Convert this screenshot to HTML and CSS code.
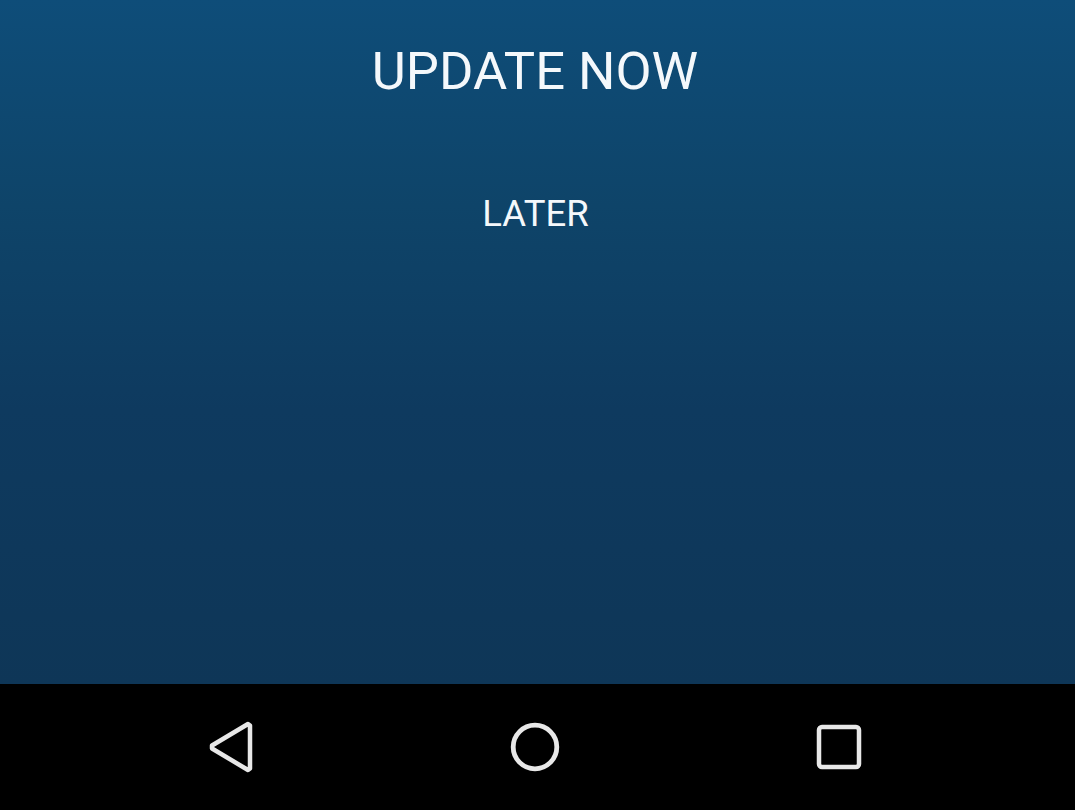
FILE: index.html
```html
<!DOCTYPE html>
<html>
<head>
<meta charset="utf-8">
<link rel="stylesheet" href="styles.css">
</head>
<body>
<div class="screen">
  <main class="content">
    <button class="btn btn-primary">UPDATE NOW</button>
    <button class="btn btn-secondary">LATER</button>
  </main>
  <nav class="navbar">
    <span class="nav-item">
      <svg width="48" height="52" viewBox="0 0 48 52"><path d="M40 3 L42 4.5 L42 47.5 L40 49 L4 27.5 L4 24.5 Z" fill="none" stroke="#e8e8e8" stroke-width="4.5" stroke-linejoin="round"/></svg>
    </span>
    <span class="nav-item">
      <svg width="50" height="50" viewBox="0 0 50 50"><circle cx="25" cy="25" r="21.8" fill="none" stroke="#e8e8e8" stroke-width="4.8"/></svg>
    </span>
    <span class="nav-item">
      <svg width="46" height="46" viewBox="0 0 46 46"><rect x="3" y="3" width="40" height="40" rx="3" fill="none" stroke="#e8e8e8" stroke-width="4.5"/></svg>
    </span>
  </nav>
</div>
</body>
</html>
```

FILE: styles.css
```css
html, body {
  margin: 0;
  padding: 0;
}
body {
  width: 1075px;
  height: 810px;
  overflow: hidden;
  font-family: Roboto, "Liberation Sans", sans-serif;
}
.screen {
  display: flex;
  flex-direction: column;
  height: 810px;
}
.content {
  height: 684px;
  background: linear-gradient(to bottom, #0e4d79 0%, #0e4469 30%, #0e3a5f 60%, #0e3657 100%);
  display: flex;
  flex-direction: column;
  align-items: center;
}
.btn {
  background: none;
  border: none;
  color: #f4f8fb;
  font-family: Roboto, "Liberation Sans", sans-serif;
  padding: 0;
  line-height: 1;
}
.btn-primary {
  font-size: 52.5px;
  margin-top: 45px;
  margin-right: 5px;
}
.btn-secondary {
  font-size: 36.5px;
  margin-top: 98px;
  margin-right: 4px;
}
.navbar {
  height: 126px;
  background: #000;
  display: flex;
  align-items: center;
  justify-content: flex-start;
  padding-left: 208px;
}
.nav-item {
  display: flex;
  align-items: center;
  justify-content: center;
}
.nav-item:nth-child(1) {
  width: 48px;
  margin-right: 254px;
}
.nav-item:nth-child(2) {
  width: 50px;
  margin-right: 256px;
}
.nav-item:nth-child(3) {
  width: 46px;
}
```
